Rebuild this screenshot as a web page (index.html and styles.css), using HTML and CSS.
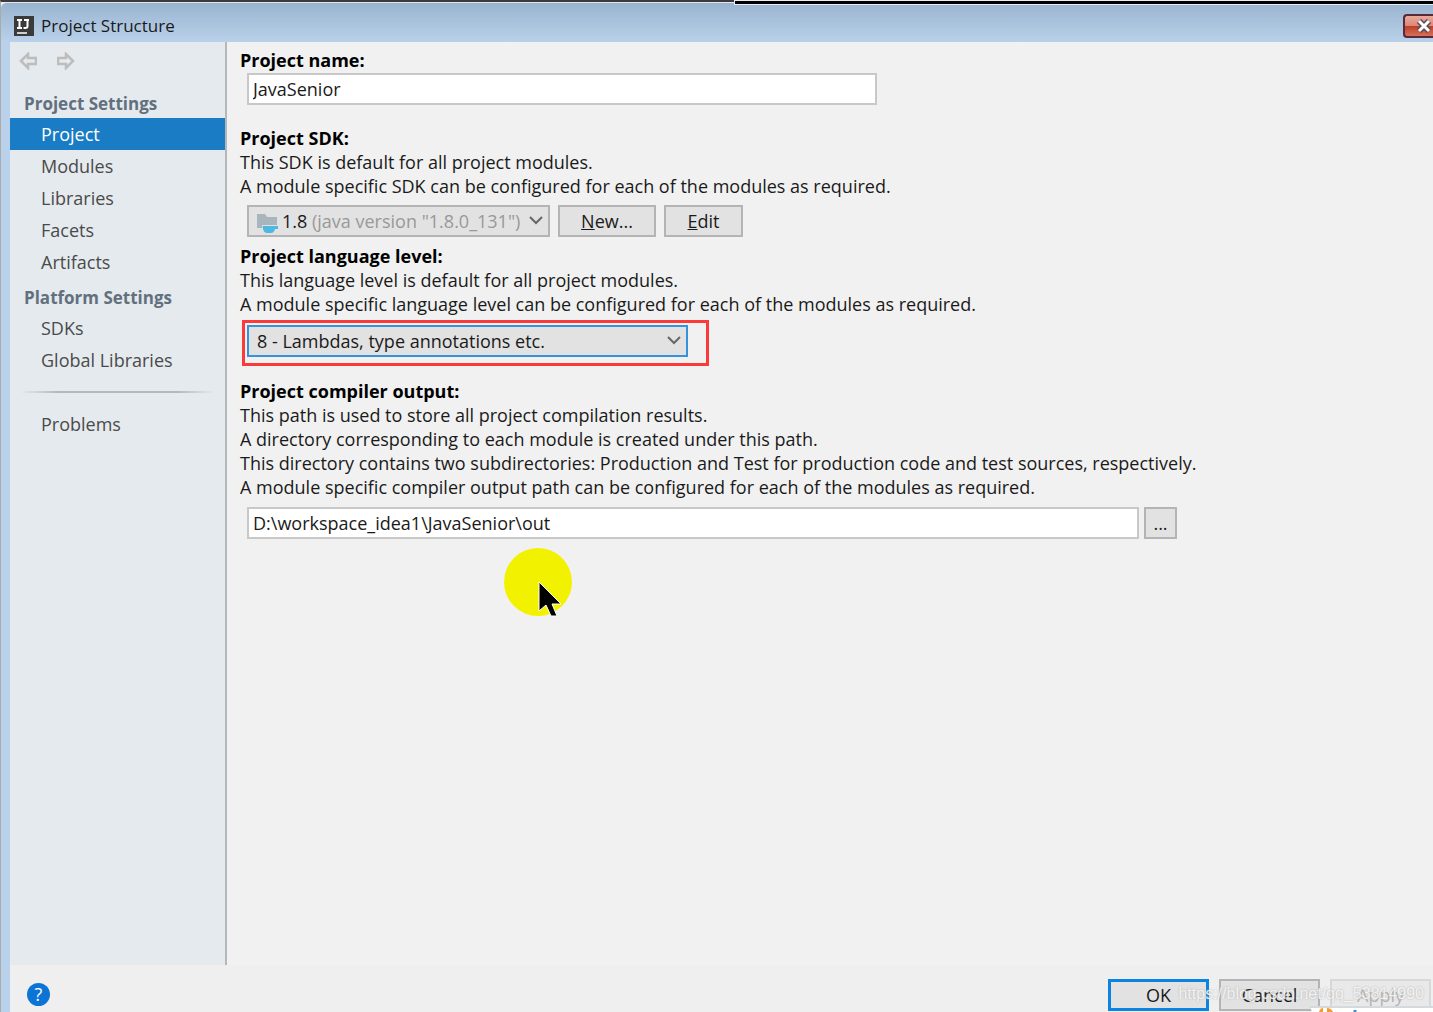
FILE: index.html
```html
<!DOCTYPE html>
<html lang="en">
<head>
    <meta charset="UTF-8">
    <meta name="viewport" content="width=device-width, initial-scale=1.0">
    <title>Project Structure</title>
    <link rel="stylesheet" href="styles.css">
</head>
<body>
    <div class="window">
        <header class="titlebar">
            <svg class="logo" width="20" height="20" viewBox="0 0 20 20">
                <rect width="20" height="20" fill="#3a3a3a"/>
                <path d="M3 4h5M5.500 4v8M3 12h5M10 4h5M13.500 4v6q0 2-2 2h-2" fill="none" stroke="#fff" stroke-width="2"/>
                <path d="M3 17h10" stroke="#cfcfcf" stroke-width="2"/>
            </svg>
            <h1>Project Structure</h1>
            <button class="close" aria-label="Close">
                <svg width="18" height="14" viewBox="0 0 18 14">
                    <path d="M4 2l10 10M14 2L4 12" stroke="#5b4a58" stroke-width="6"/>
                    <path d="M4 2l10 10M14 2L4 12" stroke="#fff" stroke-width="3"/>
                </svg>
            </button>
        </header>

        <div class="main">
            <nav class="sidebar">
                <div class="history">
                    <button aria-label="Back">
                        <svg width="18" height="18" viewBox="0 0 18 18"><path d="M2 9l7-7v4h8v6H9v4z" fill="none" stroke="#bdbdbd" stroke-width="2.500"/></svg>
                    </button>
                    <button aria-label="Forward">
                        <svg width="18" height="18" viewBox="0 0 18 18"><path d="M16 9L9 2v4H1v6h8v4z" fill="none" stroke="#bdbdbd" stroke-width="2.500"/></svg>
                    </button>
                </div>
                <h2>Project Settings</h2>
                <a href="#" class="selected">Project</a>
                <a href="#">Modules</a>
                <a href="#">Libraries</a>
                <a href="#">Facets</a>
                <a href="#">Artifacts</a>
                <h2 class="platform">Platform Settings</h2>
                <a href="#">SDKs</a>
                <a href="#">Global Libraries</a>
                <hr>
                <a href="#">Problems</a>
            </nav>

            <main class="content">
                <section class="group name">
                    <label class="heading" for="name">Project name:</label>
                    <input type="text" id="name" value="JavaSenior">
                </section>

                <section class="group sdk">
                    <label class="heading" for="sdk">Project SDK:</label>
                    <p>This SDK is default for all project modules.</p>
                    <p>A module specific SDK can be configured for each of the modules as required.</p>
                    <div class="row">
                        <div class="combo">
                            <select id="sdk"><option>1.8</option></select>
                            <svg class="folder" width="22" height="20" viewBox="0 0 22 20">
                                <path d="M0 1h8l2 3h10v11H0z" fill="#a9b5bc"/>
                                <path d="M5 12h17v4h-3q-1 3-4 4h-5q-4-2-5-8z" fill="#e2e2e2"/>
                                <path d="M6 13h15v3h-3q-1 4-4 4h-4q-3 0-4-4z" fill="#4fb8e2"/>
                            </svg>
                            <span class="version">(java version "1.8.0_131")</span>
                            <svg class="arrow" width="14" height="10" viewBox="0 0 14 10"><path d="M1 2l6 6 6-6" fill="none" stroke="#666" stroke-width="2"/></svg>
                        </div>
                        <button class="new"><u>N</u>ew...</button>
                        <button class="edit"><u>E</u>dit</button>
                    </div>
                </section>

                <section class="group level">
                    <label class="heading" for="level">Project language level:</label>
                    <p>This language level is default for all project modules.</p>
                    <p>A module specific language level can be configured for each of the modules as required.</p>
                    <div class="highlight">
                        <div class="combo">
                            <select id="level"><option>8 - Lambdas, type annotations etc.</option></select>
                            <svg class="arrow" width="14" height="10" viewBox="0 0 14 10"><path d="M1 2l6 6 6-6" fill="none" stroke="#666" stroke-width="2"/></svg>
                        </div>
                    </div>
                </section>

                <section class="group output">
                    <label class="heading" for="output">Project compiler output:</label>
                    <p>This path is used to store all project compilation results.</p>
                    <p>A directory corresponding to each module is created under this path.</p>
                    <p>This directory contains two subdirectories: Production and Test for production code and test sources, respectively.</p>
                    <p>A module specific compiler output path can be configured for each of the modules as required.</p>
                    <div class="row">
                        <input type="text" id="output" value="D:\workspace_idea1\JavaSenior\out">
                        <button class="browse" aria-label="Browse">...</button>
                    </div>
                </section>
            </main>
        </div>

        <footer class="footer">
            <button class="help">?</button>
            <button class="ok">OK</button>
            <button>Cancel</button>
            <button disabled>Apply</button>
        </footer>
    </div>

    <div class="strip"></div>
    <svg class="pointer" width="70" height="70" viewBox="0 0 70 70">
        <circle cx="35" cy="35" r="34" fill="#f2f200"/>
        <path d="M36 35v29l7-6 5 11h6l-5-12h9z" fill="#000" stroke="#fff" stroke-width="1"/>
    </svg>
    <span class="watermark">https://blog.csdn.net/qq_53814990</span>
    <svg class="toolbar-edge" width="123" height="6" viewBox="0 0 123 6">
        <path d="M0 0h123v6H2z" fill="#fff"/>
        <path d="M0 1h123" stroke="#a9b4bd"/>
        <path d="M9 6q1-4 4-4v4zM17 6V2q4 0 6 4z" fill="#f79a2e"/>
        <path d="M45 4v2" stroke="#3b8ed8" stroke-width="3"/>
    </svg>
</body>
</html>
```

FILE: styles.css
```css
* {
    box-sizing: border-box;
}
body {
    margin: 0;
    font-family: "Open Sans", "Noto Sans", sans-serif;
    font-size: 18px;
    line-height: 24px;
    color: #1a1a1a;
    background-color: #f1f1f1;
    overflow: hidden;
}
h1, h2, p {
    margin: 0;
}
button, input, select {
    font: inherit;
    color: inherit;
    margin: 0;
    border-radius: 0;
}
.window {
    display: flex;
    flex-direction: column;
    min-height: 100vh;
    border-left: 1px solid #aaa;
    border-top: 2px solid #3c3a3c;
    background-color: #efefef;
}

/* title bar */
.titlebar {
    display: flex;
    align-items: center;
    height: 40px;
    padding: 6px 0 0 13px;
    border-top: 1px solid #dde6ef;
    border-top-left-radius: 6px;
    background: linear-gradient(#9ab4d0, #b9d1ea);
}
.titlebar h1 {
    margin-left: 7px;
    font-size: 17px;
    font-weight: normal;
}
.close {
    display: flex;
    align-items: center;
    justify-content: flex-end;
    width: 30px;
    height: 24px;
    margin-left: auto;
    padding: 0;
    border: 2px solid #572a3c;
    border-right: 0;
    border-radius: 4px 0 0 4px;
    background: linear-gradient(#e9a99d, #dc8877 48%, #bd4027 52%, #d5705a);
}

/* sidebar */
.main {
    display: flex;
    flex: 1;
    border-left: 9px solid #b9d1ea;
}
.sidebar {
    width: 217px;
    flex-shrink: 0;
    border-right: 2px solid #b4b8bb;
    background-color: #e5eaee;
}
.history {
    display: flex;
    gap: 20px;
    height: 44px;
    padding: 10px 9px;
}
.history button {
    display: flex;
    width: 18px;
    height: 18px;
    padding: 0;
    border: 0;
    background: none;
}
.sidebar h2 {
    padding: 6px 0 2px 14px;
    font-size: 17px;
    line-height: 24px;
    color: #62707d;
}
.sidebar h2.platform {
    padding-top: 8px;
}
.sidebar a {
    display: block;
    padding: 4px 0 4px 31px;
    color: #4a4a4a;
    text-decoration: none;
}
.sidebar a.selected {
    color: #fff;
    background-color: #1a7cc4;
}
.sidebar hr {
    height: 2px;
    margin: 15px 10px;
    border: 0;
    background: linear-gradient(to right, transparent, #b4b8bb 20%, #b4b8bb 80%, transparent);
}

/* settings */
.content {
    flex: 1;
    min-width: 0;
    padding: 6px 13px;
    background-color: #f1f1f1;
}
.group {
    margin-bottom: 7px;
}
.group.name {
    margin-bottom: 21px;
}
.group.level {
    margin-bottom: 13px;
}
.heading {
    display: block;
    font-weight: bold;
    color: #000;
}
.group p {
    white-space: nowrap;
}
input {
    display: block;
    height: 32px;
    padding: 0 4px;
    border: 2px solid #c8c8c8;
    background-color: #fff;
}
#name {
    width: 630px;
    margin: 1px 0 0 7px;
}
#output {
    width: 892px;
}
.row {
    display: flex;
    margin: 7px 0 0 7px;
}
.output .row {
    margin-top: 8px;
}
.row button, .footer button {
    height: 32px;
    padding: 0;
    border: 2px solid #b4b4b4;
    background-color: #e2e2e2;
}
.row .new {
    width: 98px;
    margin-left: 8px;
}
.row .edit {
    width: 79px;
    margin-left: 8px;
}
.row .browse {
    width: 33px;
    margin-left: 5px;
}
.combo {
    position: relative;
    width: 303px;
}
.combo select {
    display: block;
    width: 100%;
    height: 32px;
    padding: 0 33px;
    appearance: none;
    border: 2px solid #b4b4b4;
    background-color: #e2e2e2;
}
.combo .folder {
    position: absolute;
    left: 10px;
    top: 8px;
    pointer-events: none;
}
.combo .version {
    position: absolute;
    left: 65px;
    top: 4px;
    color: #999;
    pointer-events: none;
}
.combo .arrow {
    position: absolute;
    right: 7px;
    top: 10px;
    pointer-events: none;
}
.highlight {
    width: 467px;
    margin: 4px 0 0 2px;
    padding: 2px 18px 6px 2px;
    border: 3px solid #fb3a3a;
}
.highlight .combo {
    width: 441px;
}
.highlight .combo select {
    padding: 0 8px;
    border-color: #3593dc;
}

/* buttons */
.footer {
    display: flex;
    align-items: center;
    gap: 10px;
    height: 47px;
    padding: 12px 2px 0 17px;
    border-left: 9px solid #b9d1ea;
}
.footer button {
    width: 101px;
}
.footer .ok {
    margin-left: auto;
    border: 3px solid #0a84e0;
}
.footer button:disabled {
    color: #b4b4b4;
    border-color: #d8d8d8;
    background-color: #e9e9e9;
}
.footer .help {
    width: 23px;
    height: 23px;
    border: 0;
    border-radius: 50%;
    line-height: 23px;
    color: #fff;
    background-color: #0b74d4;
}

/* things lying over the window */
.strip {
    position: absolute;
    top: 0;
    left: 734px;
    right: 0;
    height: 5px;
    border: 1px solid #e8edf2;
    border-right: 0;
    background-color: #000;
}
.pointer {
    position: absolute;
    left: 503px;
    top: 547px;
}
.watermark {
    position: absolute;
    right: 9px;
    bottom: 6px;
    font-family: "Liberation Sans", Arial, sans-serif;
    font-size: 16px;
    color: rgba(255, 255, 255, 0.8);
    text-shadow: 0 0 2px #aaa;
}
.toolbar-edge {
    position: absolute;
    right: 0;
    bottom: 0;
}
```
